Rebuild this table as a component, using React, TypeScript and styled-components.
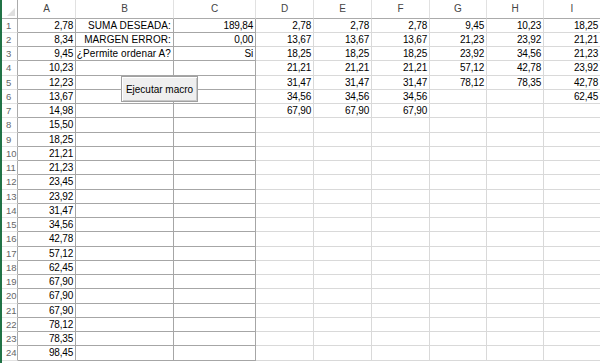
import styled, { createGlobalStyle } from "styled-components";

const GlobalStyle = createGlobalStyle`
    html, body {
        margin: 0;
        padding: 0;
        background: #ffffff;
        overflow: hidden;
    }
`;

const Window = styled.div`
    position: relative;
    width: 600px;
    height: 363px;
    overflow: hidden;
    border-left: 2px solid #217346;
    box-sizing: border-box;
    font-family: "Liberation Sans", Arial, sans-serif;
    font-size: 10px;
    color: #000;
`;

const Sheet = styled.div`
    display: grid;
    grid-template-columns: 16px 58px 98px 82px 58px 58px 58px 57px 57px 57px;
    grid-template-rows: 18.5px;
    grid-auto-rows: 14.26px;
`;

const Corner = styled.div`
    position: relative;
    border-right: 1px solid #ababab;
    border-bottom: 1px solid #ababab;
    box-sizing: border-box;
    &::after {
        content: "";
        position: absolute;
        right: 2px;
        bottom: 2px;
        border-left: 8px solid transparent;
        border-bottom: 8px solid #dfdfdf;
    }
`;

const ColHead = styled.div`
    display: flex;
    align-items: center;
    justify-content: center;
    color: #444;
    border-right: 1px solid #e1e1e1;
    border-bottom: 1px solid #ababab;
    box-sizing: border-box;
`;

const RowHead = styled.div`
    display: flex;
    align-items: center;
    padding-left: 4px;
    color: #666;
    font-size: 9.5px;
    border-right: 1px solid #ababab;
    border-bottom: 1px solid #e1e1e1;
    box-sizing: border-box;
`;

const Cell = styled.div<{ $framed?: boolean; $label?: boolean }>`
    display: flex;
    align-items: center;
    justify-content: flex-end;
    padding-right: 2px;
    white-space: nowrap;
    overflow: visible;
    letter-spacing: ${(p) => (p.$label ? "0.1px" : "-0.2px")};
    border-right: 1px solid ${(p) => (p.$framed ? "#a6a6a6" : "#d9d9d9")};
    border-bottom: 1px solid ${(p) => (p.$framed ? "#a6a6a6" : "#d9d9d9")};
    box-sizing: border-box;
`;

const MacroButton = styled.button`
    position: absolute;
    left: 119px;
    top: 76px;
    width: 77px;
    height: 26px;
    padding: 0;
    font-family: "Liberation Sans", Arial, sans-serif;
    font-size: 10px;
    color: #000;
    background: #efefef;
    border: 1px solid #a0a0a0;
    box-shadow: inset 1px 1px 0 #ffffff, inset -1px -1px 0 #c8c8c8;
`;

const COLS = ["A", "B", "C", "D", "E", "F", "G", "H", "I"];

const colA = [
    "2,78", "8,34", "9,45", "10,23", "12,23", "13,67", "14,98", "15,50",
    "18,25", "21,21", "21,23", "23,45", "23,92", "31,47", "34,56", "42,78",
    "57,12", "62,45", "67,90", "67,90", "67,90", "78,12", "78,35", "98,45",
];
const colB = ["SUMA DESEADA:", "MARGEN ERROR:", "¿Permite ordenar A?"];
const colC = ["189,84", "0,00", "Si"];
const colDEF = ["2,78", "13,67", "18,25", "21,21", "31,47", "34,56", "67,90"];
const colG = ["9,45", "21,23", "23,92", "57,12", "78,12"];
const colH = ["10,23", "23,92", "34,56", "42,78", "78,35"];
const colI = ["18,25", "21,21", "21,23", "23,92", "42,78", "62,45"];

const data: Record<string, string[]> = {
    A: colA,
    B: colB,
    C: colC,
    D: colDEF,
    E: colDEF,
    F: colDEF,
    G: colG,
    H: colH,
    I: colI,
};

const ROWS = 24;

function App() {
    return (
        <Window>
            <GlobalStyle />
            <Sheet>
                <Corner />
                {COLS.map((c) => (
                    <ColHead key={c}>{c}</ColHead>
                ))}
                {Array.from({ length: ROWS }, (_, r) => [
                    <RowHead key={`h${r}`}>{r + 1}</RowHead>,
                    ...COLS.map((c, ci) => (
                        <Cell key={`${c}${r}`} $framed={ci < 3} $label={c === "B"}>
                            {data[c][r] ?? ""}
                        </Cell>
                    )),
                ])}
            </Sheet>
            <MacroButton>Ejecutar macro</MacroButton>
        </Window>
    );
}

export default App;
